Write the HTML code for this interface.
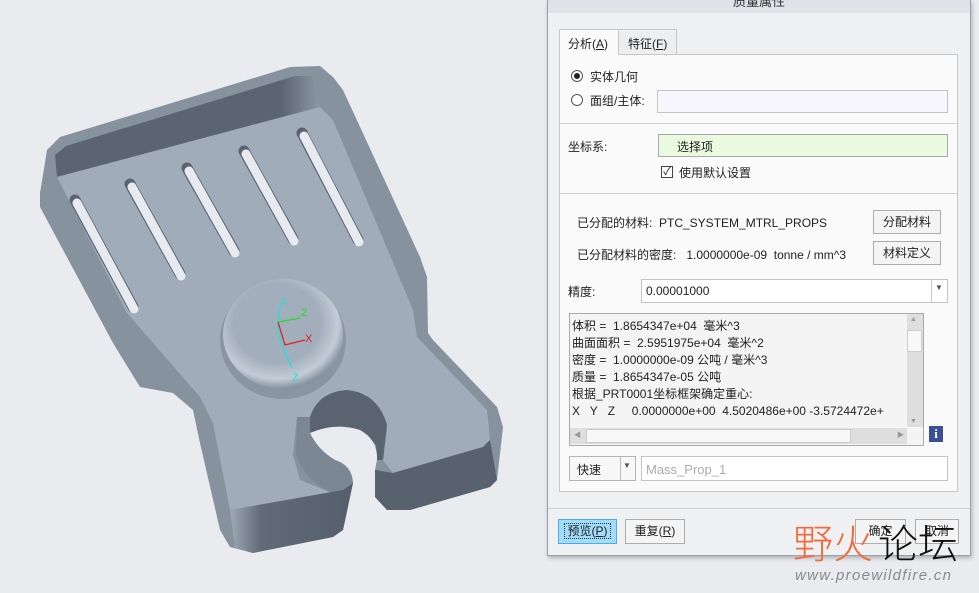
<!DOCTYPE html>
<html><head><meta charset="utf-8"><style>
*{margin:0;padding:0;box-sizing:border-box}
body{width:979px;height:593px;overflow:hidden;background:#e9ebef;font-family:"Liberation Sans","Noto Sans CJK SC",sans-serif;font-size:12px;color:#222;position:relative}
.a{position:absolute;white-space:nowrap}
.btn{position:absolute;border:1px solid #adadad;background:#f4f4f4;text-align:center;line-height:22px;font-size:12px}
.inp{position:absolute;border:1px solid #c4c4c4;background:#fff}
</style></head><body>
<svg class="a" style="left:0;top:0" width="546" height="593">
<defs>
<radialGradient id="bs" cx="0.45" cy="0.4" r="0.6"><stop offset="0.6" stop-color="#a2aebb"/><stop offset="0.85" stop-color="#c3ccd6"/><stop offset="1" stop-color="#8792a0"/></radialGradient>
<linearGradient id="fw" x1="0" y1="0" x2="1" y2="0"><stop offset="0" stop-color="#a0aab6"/><stop offset="0.25" stop-color="#616b78"/><stop offset="1" stop-color="#555f6c"/></linearGradient>
<linearGradient id="tw" x1="0" y1="0" x2="1" y2="0"><stop offset="0" stop-color="#5a6472"/><stop offset="0.85" stop-color="#5a6472"/><stop offset="1" stop-color="#8c97a4"/></linearGradient>
</defs>
<!-- outer silhouette / walls -->
<path d="M47,150 L60,137 L290,67 L320,66 L333,77 L343,90 L420,257 L427,277 L428,333 L433,340 L497,407 L503,427 L497,480 L490,487 L410,510 L387,510 L375,497 L375,467 L353,483 L343,530 L333,537 L253,553 L230,547 L220,530 L200,443 L193,410 L173,393 L140,387 L113,343 L40,207 L40,193 Z" fill="#87929f"/>
<!-- top inner wall -->
<path d="M57,177 L55,155 L66,146 L295,76 L312,76 L320,107 Z" fill="url(#tw)"/>
<!-- top face -->
<path d="M57,177 L320,107 L333,120 L413,310 L417,337 L487,410 L490,440 L483,447 L393,473 L383,460 L387,428 L370,400 L347,390 L322,398 L310,417 L297,417 L293,455 L300,480 L330,492 L343,490 L230,510 L213,423 L200,397 L127,313 Z" fill="#a0acb9"/>
<!-- notch inner dark wall -->
<path d="M310,433 L310,417 Q318,392 347,390 Q378,393 387,425 L383,460 L377,460 L376,445 Q360,425 330,430 Z" fill="#5a6471"/>
<!-- hole -->
<path d="M310,433 Q335,422 360,430 Q378,440 377,460 L375,470 L377,503 L376,520 L353,520 L353,483 Q352,465 335,460 Q318,450 310,433 Z" fill="#e9ebef"/>
<!-- notch left inner curved wall -->
<path d="M297,417 L310,417 L310,433 Q318,450 335,460 Q352,467 353,483 L350,492 L330,492 Q305,480 296,455 Z" fill="#7c8794"/>
<!-- front walls -->
<path d="M230,510 L343,490 L353,483 L343,530 L333,537 L253,553 L235,548 Z" fill="url(#fw)"/>
<path d="M375,470 L393,473 L483,447 L490,440 L497,480 L490,487 L410,510 L387,510 L375,497 Z" fill="#58626f"/>
<!-- slots -->
<g stroke-linecap="round">
<g stroke="#5a6471" stroke-width="11"><line x1="75" y1="200" x2="133" y2="307"/><line x1="130" y1="184" x2="180" y2="274"/><line x1="187" y1="168" x2="234" y2="251"/><line x1="244" y1="151" x2="293" y2="239"/><line x1="302" y1="133" x2="358" y2="240"/></g>
<g stroke="#e7eaee" stroke-width="9"><line x1="77" y1="203" x2="134" y2="309"/><line x1="132" y1="187" x2="181" y2="276"/><line x1="189" y1="171" x2="235" y2="253"/><line x1="246" y1="154" x2="294" y2="241"/><line x1="304" y1="136" x2="359" y2="242"/></g>
</g>
<!-- boss -->
<ellipse cx="283" cy="340" rx="63" ry="59" fill="#8a95a2"/>
<ellipse cx="283" cy="334" rx="60" ry="55" fill="url(#bs)"/>
<g fill="none" stroke-width="1.3"><path d="M281,305 Q275,325 280,340 L292,368" stroke="#22e0e0"/><path d="M278,322 L300,318" stroke="#22e022"/><path d="M278,322 L285,345 L305,340" stroke="#e02222"/></g>
<text x="280" y="305" font-size="11" fill="#22e0e0" font-family="Liberation Sans">3</text>
<text x="301" y="316" font-size="11" fill="#22e022" font-family="Liberation Sans">2</text>
<text x="305" y="342" font-size="11" fill="#e02222" font-family="Liberation Sans">X</text>
<text x="292" y="381" font-size="11" fill="#22e0e0" font-family="Liberation Sans">Z</text>
</svg>

<div class="a" style="left:547px;top:0;width:424px;height:556px;background:#eef0f2;border:1px solid #9aa0a8;box-shadow:1px 2px 4px rgba(0,0,0,.25)"></div>
<div class="a" style="left:548px;top:0;width:422px;height:13px;background:#dfe3e8"></div>
<div class="a" style="left:733px;top:-9px;font-size:13px;color:#333">质量属性</div>

<div class="a" style="left:559px;top:54px;width:399px;height:438px;background:#fafafa;border:1px solid #c8c8c8"></div>
<div class="a" style="left:559px;top:29px;width:60px;height:26px;background:#fafafa;border:1px solid #c8c8c8;border-bottom:none;padding:5px 0 0 8px">分析(<u>A</u>)</div>
<div class="a" style="left:618px;top:29px;width:59px;height:25px;background:#eceef0;border:1px solid #c8c8c8;border-bottom:none;padding:5px 0 0 9px">特征(<u>F</u>)</div>

<div class="a" style="left:571px;top:70px;width:12px;height:12px;border:1px solid #555;border-radius:50%;background:#fff"><div style="margin:2px;width:6px;height:6px;border-radius:50%;background:#222"></div></div>
<div class="a" style="left:590px;top:68px">实体几何</div>
<div class="a" style="left:571px;top:94px;width:12px;height:12px;border:1px solid #555;border-radius:50%;background:#fff"></div>
<div class="a" style="left:590px;top:92px">面组/主体:</div>
<div class="inp" style="left:657px;top:90px;width:291px;height:23px;background:#f8f6fd"></div>
<div class="a" style="left:560px;top:123px;width:397px;height:1px;background:#d0d0d0"></div>
<div class="a" style="left:568px;top:138px">坐标系:</div>
<div class="inp" style="left:658px;top:134px;width:290px;height:23px;background:#e9fadf;border-color:#a8a8a8;padding:3px 0 0 18px">选择项</div>
<div class="a" style="left:661px;top:166px;width:12px;height:12px;border:1px solid #444;background:#fff;font-size:11px;line-height:10px;text-align:center">✓</div>
<div class="a" style="left:679px;top:164px">使用默认设置</div>
<div class="a" style="left:560px;top:193px;width:397px;height:1px;background:#d0d0d0"></div>

<div class="a" style="left:577px;top:214px">已分配的材料:&nbsp; PTC_SYSTEM_MTRL_PROPS</div>
<div class="btn" style="left:873px;top:210px;width:68px;height:24px">分配材料</div>
<div class="a" style="left:577px;top:246px">已分配材料的密度:&nbsp;&nbsp; 1.0000000e-09&nbsp; tonne / mm^3</div>
<div class="btn" style="left:873px;top:241px;width:68px;height:24px">材料定义</div>
<div class="a" style="left:568px;top:283px">精度:</div>
<div class="inp" style="left:641px;top:279px;width:307px;height:24px;padding:4px 0 0 4px">0.00001000</div>
<div class="a" style="left:931px;top:280px;width:1px;height:22px;background:#c8c8c8"></div>
<div class="a" style="left:935px;top:283px;font-size:8px;color:#555">▼</div>

<div class="a" style="left:569px;top:313px;width:355px;height:133px;background:#f4f4f4;border:1px solid #aaa"></div>
<div class="a" style="left:572px;top:318px;line-height:17px;font-size:12px;color:#222">体积 =&nbsp; 1.8654347e+04&nbsp; 毫米^3<br>曲面面积 =&nbsp; 2.5951975e+04&nbsp; 毫米^2<br>密度 =&nbsp; 1.0000000e-09 公吨 / 毫米^3<br>质量 =&nbsp; 1.8654347e-05 公吨<br>根据_PRT0001坐标框架确定重心:<br>X&nbsp;&nbsp; Y&nbsp;&nbsp; Z&nbsp;&nbsp;&nbsp;&nbsp; 0.0000000e+00&nbsp; 4.5020486e+00 -3.5724472e+</div>
<div class="a" style="left:907px;top:314px;width:16px;height:113px;background:#dedede"></div>
<div class="a" style="left:907px;top:330px;width:15px;height:22px;background:#f8f8f8;border:1px solid #ccc"></div>
<div class="a" style="left:910px;top:316px;font-size:7px;color:#999">▲</div>
<div class="a" style="left:910px;top:418px;font-size:7px;color:#999">▼</div>
<div class="a" style="left:570px;top:428px;width:337px;height:16px;background:#dedede"></div>
<div class="a" style="left:586px;top:429px;width:265px;height:14px;background:#f8f8f8;border:1px solid #ccc"></div>
<div class="a" style="left:574px;top:430px;font-size:7px;color:#999">◀</div>
<div class="a" style="left:897px;top:430px;font-size:7px;color:#999">▶</div>
<div class="a" style="left:929px;top:426px;width:14px;height:16px;background:#3c4f96;color:#fff;font-weight:bold;font-family:'Liberation Serif',serif;text-align:center;line-height:16px;font-size:13px">i</div>

<div class="inp" style="left:569px;top:456px;width:67px;height:25px;background:#f7f7f7;border-color:#b5b5b5;padding:4px 0 0 7px">快速</div>
<div class="a" style="left:620px;top:457px;width:1px;height:23px;background:#bbb"></div>
<div class="a" style="left:623px;top:461px;font-size:8px;color:#555">▼</div>
<div class="inp" style="left:641px;top:456px;width:307px;height:25px;padding:5px 0 0 4px;color:#aaa;font-size:13px">Mass_Prop_1</div>

<div class="a" style="left:548px;top:508px;width:422px;height:1px;background:#cfcfcf"></div>
<div class="btn" style="left:558px;top:519px;width:59px;height:25px;background:#a2dcfb;border-color:#4ea9ee"><span style="border:1px dotted #333;padding:0 2px">预览(<u>P</u>)</span></div>
<div class="btn" style="left:625px;top:519px;width:60px;height:25px">重复(<u>R</u>)</div>
<div class="btn" style="left:855px;top:519px;width:51px;height:25px">确定</div>
<div class="btn" style="left:915px;top:519px;width:44px;height:25px">取消</div>

<div class="a" style="left:793px;top:517px;font-size:40px;color:#f26a3c;font-family:'Noto Sans CJK SC',sans-serif;line-height:48px;font-weight:300">野火</div>
<div class="a" style="left:878px;top:517px;font-size:40px;color:#111;font-family:'Noto Sans CJK SC',sans-serif;line-height:48px;font-weight:300">论坛</div>
<div class="a" style="left:795px;top:567px;font-size:15px;color:#8a8a8a;font-style:italic;letter-spacing:1.3px">www.proewildfire.cn</div>
</body></html>
